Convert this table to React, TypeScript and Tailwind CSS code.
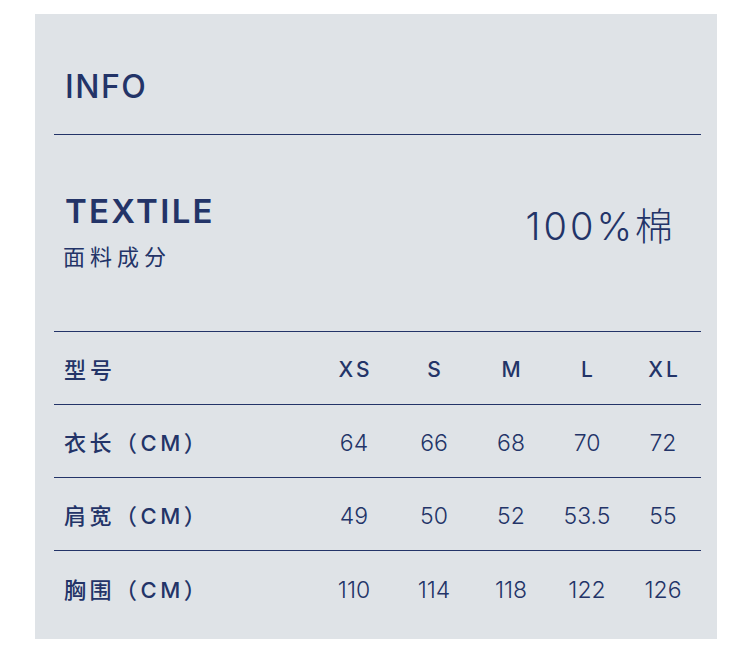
import React from 'react';

const sizes = ['XS', 'S', 'M', 'L', 'XL'];

const rows = [
  { label: '衣长（CM）', values: ['64', '66', '68', '70', '72'] },
  { label: '肩宽（CM）', values: ['49', '50', '52', '53.5', '55'] },
  { label: '胸围（CM）', values: ['110', '114', '118', '122', '126'] },
];

const font = { fontFamily: 'Inter, "Noto Sans CJK SC", sans-serif' };

const App = () => {
  return (
    <div className="w-[750px] h-[662px] bg-white pt-[14px] pl-[35px]" style={font}>
      <div className="w-[682px] h-[625px] bg-[#dfe3e7] pl-[19px] pr-[16px] text-[#233468]">
        {/* Title */}
        <div className="h-[121px] border-b border-[#233468]">
          <div className="pt-[57px] pl-[11px] text-[32px] leading-none font-medium tracking-[1.5px]">
            INFO
          </div>
        </div>

        {/* Textile */}
        <div className="h-[197px] border-b border-[#233468] flex justify-between pl-[11px] pr-[25px]">
          <div className="pt-[60px]">
            <div className="text-[33px] leading-none font-semibold tracking-[2.3px]">TEXTILE</div>
            <div className="mt-[18px] -ml-[2px] text-[22px] leading-none font-normal tracking-[5px]">面料成分</div>
          </div>
          <div className="pt-[72px] text-[38px] leading-none font-light tracking-[3px]">100%棉</div>
        </div>

        {/* Size table */}
        <div className="grid grid-cols-[1fr_82px_78px_76px_76px_76px] h-[73px] items-center border-b border-[#233468] pl-[10px] pt-[4px]">
          <div className="text-[22px] font-medium tracking-[4px]">型号</div>
          {sizes.map((s) => (
            <div key={s} className="text-center text-[21px] font-medium tracking-[3px] pl-[3px]">
              {s}
            </div>
          ))}
        </div>
        {rows.map((row, i) => (
          <div
            key={row.label}
            className={
              i < rows.length - 1
                ? 'grid grid-cols-[1fr_82px_78px_76px_76px_76px] h-[73px] items-center border-b border-[#233468] pl-[10px] pt-[4px]'
                : 'grid grid-cols-[1fr_82px_78px_76px_76px_76px] h-[74px] items-center pl-[10px] pt-[4px]'
            }
          >
            <div className="text-[22px] font-medium tracking-[3.5px]">{row.label}</div>
            {row.values.map((v, j) => (
              <div key={j} className="text-center text-[23px] font-light">
                {v}
              </div>
            ))}
          </div>
        ))}
      </div>
    </div>
  );
};

export default App;
